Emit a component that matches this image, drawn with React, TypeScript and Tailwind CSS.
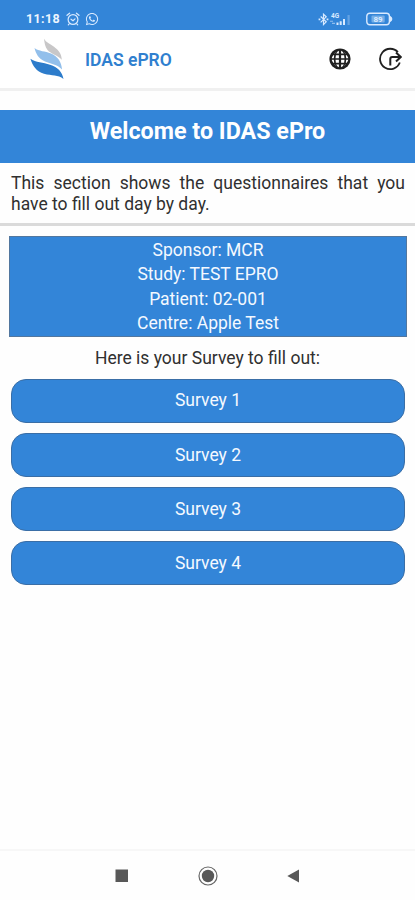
import { FaWhatsapp } from "react-icons/fa";

const details = [
  { label: "Sponsor", value: "MCR" },
  { label: "Study", value: "TEST EPRO" },
  { label: "Patient", value: "02-001" },
  { label: "Centre", value: "Apple Test" },
];

const surveys = ["Survey 1", "Survey 2", "Survey 3", "Survey 4"];

function AlarmIcon() {
  return (
    <svg className="h-[14px] w-[14px]" viewBox="0 0 14 14" fill="none" stroke="currentColor" strokeWidth={1.2} strokeLinecap="round" strokeLinejoin="round">
      <circle cx="7" cy="7.5" r="4.9" />
      <path d="M1 3.3 3.6 1.2M13 3.3 10.4 1.2M5 7.2l2 1.6 2-1.9M3.2 11.8l-.9 1M10.8 11.8l.9 1" />
    </svg>
  );
}

function BluetoothIcon() {
  return (
    <svg className="h-[13px] w-[11px]" viewBox="0 0 11 13" fill="none" stroke="currentColor" strokeWidth={1.2}>
      <path d="m2.7 3.5 5.5 5.3-2.7 2.7V1.2l2.7 2.6-5.5 5.5" />
      <path d="M.6 6.4h1.8M8.6 6.4h1.8" strokeWidth={1.8} />
    </svg>
  );
}

function SignalIcon() {
  return (
    <svg className="h-[14px] w-[23px]" viewBox="0 0 23 14" fill="currentColor">
      <text x="2" y="5.5" fontSize="6.5" fontWeight="700">4G</text>
      <path d="M1 8.7h3v1.1H1zM3 10.8h3v1.1H3z" opacity=".55" />
      <path d="M7.5 10.5h2V13h-2zM10.7 9.3h2V13h-2zM14 7h2v6h-2z" />
      <path d="M18.5 3h2.2v10h-2.2z" opacity=".3" />
    </svg>
  );
}

function BatteryIcon() {
  return (
    <svg className="h-[14px] w-[27px]" viewBox="0 0 27 14">
      <rect x=".8" y="1.2" width="22.6" height="11.6" rx="3" fill="none" stroke="currentColor" strokeWidth={1.4} />
      <path d="M24 3.7q2.4 1.2 2.4 3.3T24 10.3z" fill="currentColor" />
      <rect x="5.5" y="3.6" width="13.2" height="7" rx="1" fill="currentColor" opacity=".4" />
      <text x="12.1" y="9.8" fontSize="8" fontWeight="700" textAnchor="middle" fill="currentColor">89</text>
    </svg>
  );
}

function Logo() {
  return (
    <svg className="h-[42px] w-[34px]" viewBox="0 0 34 42">
      <path d="M14 .8C16 4.500 20 6 24 8.800C29 12.500 31.500 16 31.800 21.800C28 17.500 21 16 17.500 12C15 9 14.500 5 14 .8Z" fill="#c8c7c8" />
      <path d="M4.500 10C9 13.500 15 13 21 15.500C28 18.500 31.500 24 32 31.500C27 26 21 26 15 23.500C8.500 20.500 6 16 4.500 10Z" fill="#92bfeb" />
      <path d="M.4 20.800C6 24.500 13 24.500 20 26.800C28 29.500 32 33.500 33.500 41C28 36.500 22 38 14 35.800C6.500 33.500 2.500 28 .4 20.800Z" fill="#2d7ccb" />
    </svg>
  );
}

function GlobeIcon() {
  return (
    <svg className="h-[22px] w-[22px]" viewBox="0 0 22 22">
      <circle cx="11" cy="11" r="10.6" fill="#202020" />
      <g fill="#fff">
        <path d="M9.900 2.800v2.700H7.200q.9-2.200 2.700-2.700zM12.100 2.800v2.700h2.700q-.9-2.200-2.700-2.700z" />
        <path d="M5.200 7.300h-1q-1.300 1.800-1.500 3h2.100zM16.800 7.300h1q1.300 1.800 1.500 3h-2.100z" />
        <path d="M6.900 7.300h3v3H6.500zM12.100 7.300h3l.4 3h-3.400z" />
        <path d="M4.800 11.800H2.700q.2 1.200 1.500 3h1zM17.200 11.800h2.100q-.2 1.200-1.500 3h-1z" />
        <path d="M6.500 11.800h3.400v3h-3zM12.100 11.800h3.400l-.4 3h-3z" />
        <path d="M9.900 19.200v-2.700H7.200q.9 2.200 2.700 2.700zM12.100 19.200v-2.700h2.700q-.9 2.200-2.700 2.700z" />
        <path d="M5.400 5.500 6.800 4l-.9 1.500zM16.600 5.500 15.200 4l.9 1.500zM5.400 16.500 6.800 18l-.9-1.500zM16.600 16.500 15.200 18l.9-1.500z" />
      </g>
    </svg>
  );
}

function ExitIcon() {
  return (
    <svg className="h-[24px] w-[23px]" viewBox="0 0 23 24" fill="none" stroke="#202020">
      <path d="M18.900 5.200A10.200 10.200 0 1 0 20.800 15.500" strokeWidth={1.8} />
      <path d="M11.300 18.500V12q0-2 2-2h7.500" strokeWidth={2} />
      <path d="m17 5.500 4.700 4.500-4.700 4.500" strokeWidth={2} />
    </svg>
  );
}

function StatusBar() {
  return (
    <div className="flex h-[30px] items-center justify-between bg-[#3385d8] pl-[26px] pr-[22px] pt-[8px] text-[#d9eaff]">
      <div className="flex items-center">
        <span className="w-[40px] text-[12.5px] font-bold leading-none tracking-[0.35px] text-[#eef6ff]">11:18</span>
        <AlarmIcon />
        <FaWhatsapp className="ml-[5px] h-[14px] w-[14px]" />
      </div>
      <div className="flex items-center">
        <BluetoothIcon />
        <SignalIcon />
        <div className="ml-[14px]">
          <BatteryIcon />
        </div>
      </div>
    </div>
  );
}

export default function App() {
  return (
    <div className="flex h-[900px] w-full flex-col bg-[#fefefe] font-[Roboto,sans-serif] text-[#303030]">
      <StatusBar />

      <header className="flex h-[61px] items-center border-b-[3px] border-[#f0f0f0] bg-white pl-[30px] pr-[13px]">
        <Logo />
        <h1 className="ml-[21px] mt-[2px] flex-1 text-[17.5px] font-semibold text-[#3080cf]">IDAS ePRO</h1>
        <GlobeIcon />
        <div className="ml-[28px]">
          <ExitIcon />
        </div>
      </header>

      <main className="flex-1">
        <section className="mt-[19px] h-[116px] border-b-[3px] border-[#dadada]">
          <h2 className="h-[53px] bg-[#3385d8] pt-[6px] text-center text-[23.3px] font-bold leading-[30px] text-white">
            Welcome to IDAS ePro
          </h2>
          <p className="pl-[11px] pr-[10px] pt-[10px] text-justify text-[17.5px] leading-[20.5px]">
            This section shows the questionnaires that you have to fill out day by day.
          </p>
        </section>

        <div className="ml-[9px] mr-[8px] mt-[10px] h-[101px] border border-[#52779f] bg-[#3385d8] pt-[0.5px] text-center text-[17.5px] leading-[24.6px] text-[#f4f9ff]">
          {details.map((d) => (
            <div key={d.label}>
              {d.label}: {d.value}
            </div>
          ))}
        </div>

        <p className="pt-[9px] text-center text-[17.5px] leading-[25px]">Here is your Survey to fill out:</p>

        <div className="mt-[7.5px] flex flex-col gap-[10.2px] pl-[11px] pr-[10px]">
          {surveys.map((name) => (
            <button key={name} className="h-[44px] rounded-[15px] border border-[#3a6ea6] bg-[#3385d8] text-[17.5px] text-[#f4f9ff]">
              {name}
            </button>
          ))}
        </div>
      </main>

      <nav className="flex h-[51px] items-center justify-center gap-[66px] border-t-2 border-[#f7f7f7]">
        <svg className="h-[20px] w-[20px]" viewBox="0 0 20 20">
          <path d="M3.5 3.5H16V16H3.5z" fill="#585858" />
        </svg>
        <svg className="h-[20px] w-[20px]" viewBox="0 0 20 20">
          <circle cx="10" cy="10" r="9" fill="none" stroke="#666" strokeWidth={1.2} />
          <circle cx="10" cy="10" r="6.2" fill="#585858" />
        </svg>
        <svg className="h-[20px] w-[20px]" viewBox="0 0 20 20">
          <path d="M3.300 10 15 3.500v13z" fill="#585858" />
        </svg>
      </nav>
    </div>
  );
}
